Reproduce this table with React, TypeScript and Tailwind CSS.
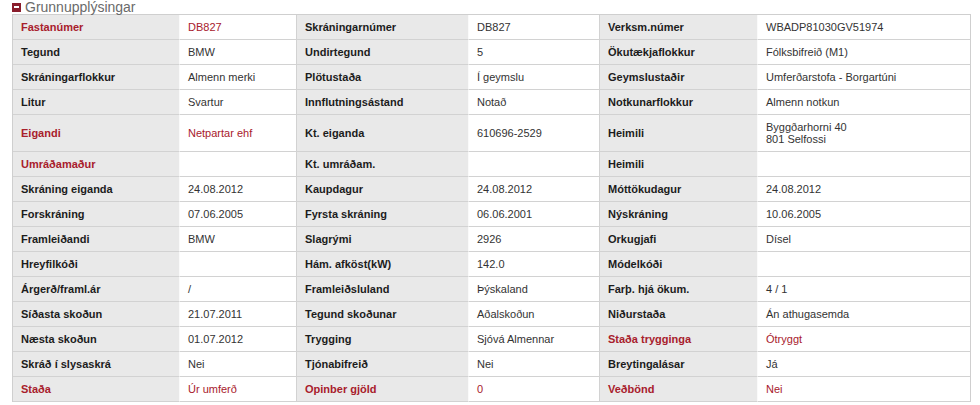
const RED = "text-[#a8202c]";

type Cell = { label: string; value: React.ReactNode; red?: boolean; redValue?: boolean };

const rows: { cells: Cell[]; tall?: boolean }[] = [
  {
    cells: [
      { label: "Fastanúmer", value: "DB827", red: true, redValue: true },
      { label: "Skráningarnúmer", value: "DB827" },
      { label: "Verksm.númer", value: "WBADP81030GV51974" },
    ],
  },
  {
    cells: [
      { label: "Tegund", value: "BMW" },
      { label: "Undirtegund", value: "5" },
      { label: "Ökutækjaflokkur", value: "Fólksbifreið (M1)" },
    ],
  },
  {
    cells: [
      { label: "Skráningarflokkur", value: "Almenn merki" },
      { label: "Plötustaða", value: "Í geymslu" },
      { label: "Geymslustaðir", value: "Umferðarstofa - Borgartúni" },
    ],
  },
  {
    cells: [
      { label: "Litur", value: "Svartur" },
      { label: "Innflutningsástand", value: "Notað" },
      { label: "Notkunarflokkur", value: "Almenn notkun" },
    ],
  },
  {
    tall: true,
    cells: [
      { label: "Eigandi", value: "Netpartar ehf", red: true, redValue: true },
      { label: "Kt. eiganda", value: "610696-2529" },
      {
        label: "Heimili",
        value: (
          <>
            Byggðarhorni 40
            <br />
            801 Selfossi
          </>
        ),
      },
    ],
  },
  {
    cells: [
      { label: "Umráðamaður", value: "", red: true },
      { label: "Kt. umráðam.", value: "" },
      { label: "Heimili", value: "" },
    ],
  },
  {
    cells: [
      { label: "Skráning eiganda", value: "24.08.2012" },
      { label: "Kaupdagur", value: "24.08.2012" },
      { label: "Móttökudagur", value: "24.08.2012" },
    ],
  },
  {
    cells: [
      { label: "Forskráning", value: "07.06.2005" },
      { label: "Fyrsta skráning", value: "06.06.2001" },
      { label: "Nýskráning", value: "10.06.2005" },
    ],
  },
  {
    cells: [
      { label: "Framleiðandi", value: "BMW" },
      { label: "Slagrými", value: "2926" },
      { label: "Orkugjafi", value: "Dísel" },
    ],
  },
  {
    cells: [
      { label: "Hreyfilkóði", value: "" },
      { label: "Hám. afköst(kW)", value: "142.0" },
      { label: "Módelkóði", value: "" },
    ],
  },
  {
    cells: [
      { label: "Árgerð/framl.ár", value: "/" },
      { label: "Framleiðsluland", value: "Þýskaland" },
      { label: "Farþ. hjá ökum.", value: "4 / 1" },
    ],
  },
  {
    cells: [
      { label: "Síðasta skoðun", value: "21.07.2011" },
      { label: "Tegund skoðunar", value: "Aðalskoðun" },
      { label: "Niðurstaða", value: "Án athugasemda" },
    ],
  },
  {
    cells: [
      { label: "Næsta skoðun", value: "01.07.2012" },
      { label: "Trygging", value: "Sjóvá Almennar" },
      { label: "Staða trygginga", value: "Ótryggt", red: true, redValue: true },
    ],
  },
  {
    cells: [
      { label: "Skráð í slysaskrá", value: "Nei" },
      { label: "Tjónabifreið", value: "Nei" },
      { label: "Breytingalásar", value: "Já" },
    ],
  },
  {
    cells: [
      { label: "Staða", value: "Úr umferð", red: true, redValue: true },
      { label: "Opinber gjöld", value: "0", red: true, redValue: true },
      { label: "Veðbönd", value: "Nei", red: true, redValue: true },
    ],
  },
];

export default function App() {
  return (
    <div className="w-[980px] h-[405px] overflow-hidden bg-white font-['Liberation_Sans',Arial,sans-serif]">
      <div className="flex items-center h-[14px] pl-[12px]">
        <span className="flex items-center justify-center w-[9px] h-[9px] bg-[#8a1d2c] mr-[4px]">
          <span className="block w-[5px] h-[2px] bg-white" />
        </span>
        <span className="text-[14px] leading-[14px] text-[#6a6a6a]">Grunnupplýsingar</span>
      </div>
      <div className="ml-[12px] w-[959px] border-l border-r border-t border-[#cfcfcf] grid grid-cols-[167px_117px_172px_131px_158px_212px]">
        {rows.map((row, i) =>
          row.cells.map((c, j) => (
            <div key={`${i}-${j}`} className="contents">
              <div
                className={`flex items-center pl-[8px] bg-[#e9e9e9] border-b border-r border-b-[#d2d2d2] border-r-[#fafafa] text-[11px] font-bold ${
                  row.tall ? "h-[37px]" : "h-[25px]"
                } ${c.red ? RED : "text-[#1c1c1c]"}`}
              >
                {c.label}
              </div>
              <div
                className={`flex items-center pl-[8px] bg-white border-b border-r border-[#d2d2d2] text-[11px] leading-[12px] ${
                  row.tall ? "h-[37px]" : "h-[25px]"
                } ${j === 2 ? "border-r-0" : ""} ${c.redValue ? RED : "text-[#333]"}`}
              >
                <span>{c.value}</span>
              </div>
            </div>
          ))
        )}
      </div>
    </div>
  );
}
